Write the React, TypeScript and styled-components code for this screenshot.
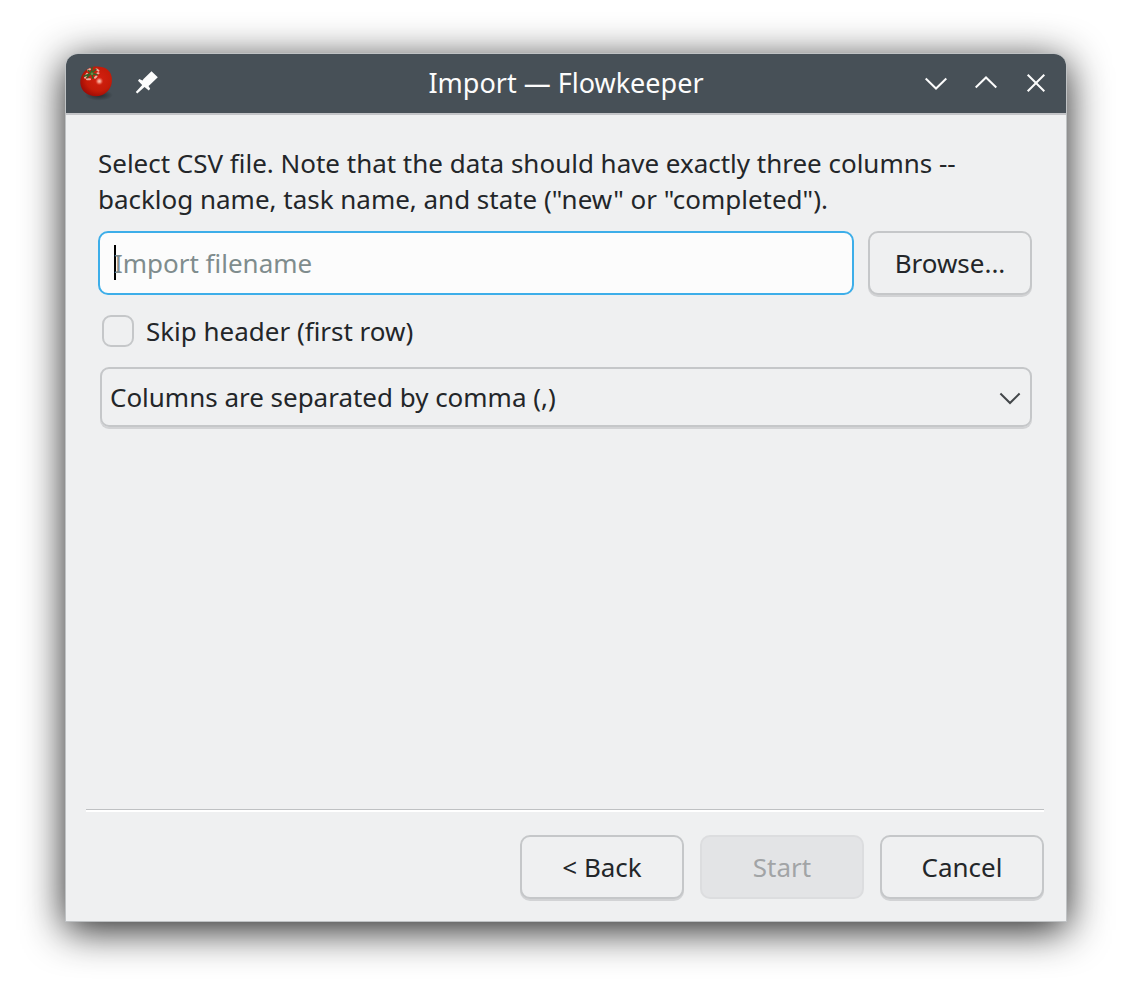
import React from "react";
import styled, { createGlobalStyle } from "styled-components";

const GlobalStyle = createGlobalStyle`
  * { box-sizing: border-box; }
  html, body { margin: 0; background: #fff; }
  body, button, input {
    font-family: "Noto Sans", "Liberation Sans", sans-serif;
    font-size: 25.97px;
    color: #232629;
  }
`;

const Desktop = styled.main`
  height: 999px;
  padding: 53px 65px 77px;
  overflow: hidden;
`;

const Window = styled.section`
  display: flex;
  flex-direction: column;
  width: 1002px;
  height: 869px;
  border: 1px solid #bfc2c4;
  border-radius: 13px 13px 0 0;
  background: #eff0f1;
  box-shadow: 0 8px 40px rgba(0, 0, 0, 0.88);
`;

const TitleBar = styled.header`
  display: grid;
  grid-template-columns: 1fr auto 1fr;
  align-items: center;
  height: 61px;
  padding: 0 18px 1px 14px;
  border-bottom: 2px solid #c4c5c8;
  border-radius: 12px 12px 0 0;
  background: #475057;
  color: #fcfcfc;
`;

const TitleGroup = styled.div<{ $end?: boolean; $gap: number }>`
  display: flex;
  align-items: center;
  justify-content: ${(p) => (p.$end ? "flex-end" : "flex-start")};
  gap: ${(p) => p.$gap}px;
`;

const Title = styled.h1`
  margin: 0 0 1px 4px;
  font-size: 27px;
  font-weight: 400;
  line-height: 36px;
`;

const Icon = styled.svg`
  display: block;
  flex: none;
`;

const Page = styled.div`
  flex: 1;
  padding: 30px 34px 0 32px;
`;

const Note = styled.p`
  margin: 0;
  line-height: 36px;
  white-space: nowrap;
`;

const FileRow = styled.div`
  display: flex;
  gap: 14px;
  margin-top: 14px;
`;

const Field = styled.div`
  display: flex;
  align-items: center;
  flex: 1;
  height: 64px;
  padding: 0 0 1px 14px;
  border: 2px solid #3daee9;
  border-radius: 10px;
  background: #fcfcfc;
  color: #7f8c8d;
`;

const Caret = styled.span`
  width: 2px;
  height: 35px;
  margin-right: -2px;
  background: #000;
`;

const Button = styled.button`
  width: 164px;
  height: 64px;
  padding: 0;
  border: 2px solid #c5c7c9;
  border-radius: 10px;
  background: #eff0f1;
  box-shadow: 0 2px 0 #d2d3d5;

  &:disabled {
    border-color: #dcdddf;
    background: #e3e4e6;
    box-shadow: none;
    color: #a2a4a6;
  }
`;

const CheckRow = styled.label`
  display: flex;
  align-items: center;
  gap: 12px;
  height: 36px;
  margin: 18px 0 0 4px;
`;

const CheckBox = styled.span`
  width: 32px;
  height: 32px;
  border: 2px solid #c5c7c9;
  border-radius: 9px;
`;

const Select = styled.div`
  display: flex;
  align-items: center;
  justify-content: space-between;
  height: 60px;
  margin: 18px 0 0 2px;
  padding: 0 8px;
  border: 2px solid #c5c7c9;
  border-radius: 9px;
  box-shadow: 0 2px 0 #d2d3d5;
`;

const Footer = styled.footer`
  display: flex;
  flex-direction: column;
  margin: 0 22px 22px 20px;
`;

const Divider = styled.hr`
  width: 100%;
  height: 3px;
  margin: 0 0 23px;
  border: 0;
  border-top: 1px solid #bfc1c3;
  background: #fff;
`;

const Actions = styled.div`
  display: flex;
  justify-content: flex-end;
  gap: 16px;
`;

const Tomato = () => (
  <Icon width="34" height="40" viewBox="0 -1.2 34 40">
    <defs>
      <radialGradient id="skin" cx="0.58" cy="0.42" r="0.62">
        <stop offset="0" stopColor="#d42010" />
        <stop offset="0.65" stopColor="#c41b08" />
        <stop offset="1" stopColor="#9c0c06" />
      </radialGradient>
      <radialGradient id="shine">
        <stop offset="0" stopColor="#fbc4b8" />
        <stop offset="0.4" stopColor="#f08a78" />
        <stop offset="1" stopColor="#e0442e" stopOpacity="0" />
      </radialGradient>
      <radialGradient id="ground">
        <stop offset="0" stopColor="#1d2226" stopOpacity="0.8" />
        <stop offset="1" stopColor="#1d2226" stopOpacity="0" />
      </radialGradient>
    </defs>
    <ellipse cx="19" cy="31" rx="14" ry="5.500" fill="url(#ground)" />
    <path d="M9 4C13 1.500 23 1.500 27 5C31 8 32.500 13 31.800 18C31 26 24 32 16 32C8 32 1 27 0.300 19C0 12 4 6 9 4Z" fill="url(#skin)" />
    <circle cx="19.300" cy="17" r="4.200" fill="url(#shine)" />
    <g fill="none" strokeLinecap="round">
      <path d="M5 13.500L7 9.500M7 15L10 15M15 13.500L16.500 12M16.500 5L18.500 6.500M8 6L10 5M17.500 9L18.500 9" stroke="#f2aca0" strokeWidth="2" />
      <path d="M11.500 9L4 12M11.500 9L8 6M11.500 9L12 3M11.500 9L16 5M11.500 9L17 10.500M11.500 9L13 14M10 10L7 13.500" stroke="#35652b" strokeWidth="1.500" />
    </g>
    <circle cx="12" cy="9.500" r="1.300" fill="#6c8f43" />
  </Icon>
);

const Pin = () => (
  <Icon width="24" height="24" viewBox="0 0 24 24" fill="#fcfcfc">
    <path d="M16.500 0.300L22.800 6.300L15 13.800L13.500 15L15.200 17.800L13.800 19.500L9.500 16L2.300 22.500L0.800 21L7.200 14L3 9.800L4.200 8L7.500 9.500L8.500 8Z" />
  </Icon>
);

const Stroke = ({ d, color = "#fcfcfc" }: { d: string; color?: string }) => (
  <Icon width="24" height="24" viewBox="0 0 24 24" fill="none" stroke={color} strokeWidth="2">
    <path d={d} />
  </Icon>
);

export default function App() {
  return (
    <>
      <GlobalStyle />
      <Desktop>
        <Window>
          <TitleBar>
            <TitleGroup $gap={21}>
              <Tomato />
              <Pin />
            </TitleGroup>
            <Title>Import — Flowkeeper</Title>
            <TitleGroup $end $gap={26}>
              <Stroke d="M1.700 7.500L12 17.500L22.300 7.500" />
              <Stroke d="M1.700 16.500L12 6.500L22.300 16.500" />
              <Stroke d="M3.700 3.700L20.300 20.300M20.300 3.700L3.700 20.300" />
            </TitleGroup>
          </TitleBar>
          <Page>
            <Note>
              Select CSV file. Note that the data should have exactly three columns --
              <br />
              backlog name, task name, and state ("new" or "completed").
            </Note>
            <FileRow>
              <Field>
                <Caret />
                Import filename
              </Field>
              <Button>Browse...</Button>
            </FileRow>
            <CheckRow>
              <CheckBox />
              Skip header (first row)
            </CheckRow>
            <Select>
              Columns are separated by comma (,)
              <Stroke d="M2.400 8.500L12 18L21.600 8.500" color="#43474a" />
            </Select>
          </Page>
          <Footer>
            <Divider />
            <Actions>
              <Button>&lt; Back</Button>
              <Button disabled>Start</Button>
              <Button>Cancel</Button>
            </Actions>
          </Footer>
        </Window>
      </Desktop>
    </>
  );
}
